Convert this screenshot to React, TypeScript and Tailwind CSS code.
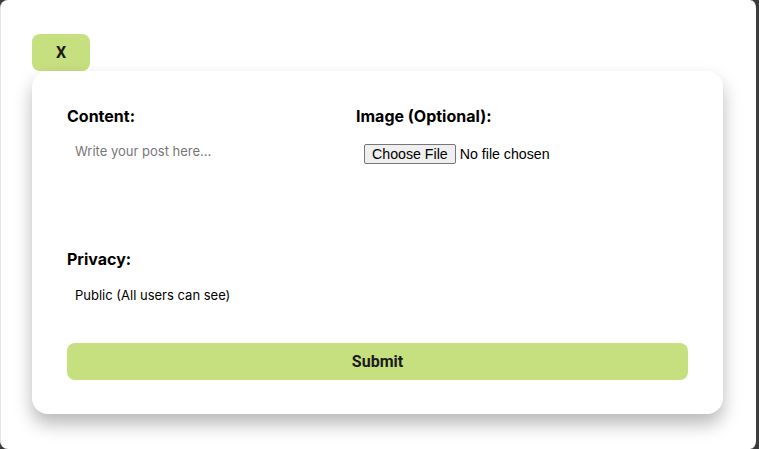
import React from 'react';

const App: React.FC = () => {
  return (
    <div className="w-[759px] h-[449px] bg-[#3a3a3a]">
      <div className="w-[758px] h-[449px] bg-white rounded-[8px] border-r-2 border-l border-l-[#e6e6e6] border-r-[#3c3c3c] pt-[34px] pl-[31px]" style={{ fontFamily: 'Inter, "Liberation Sans", sans-serif' }}>
        <button className="w-[58px] h-[37px] rounded-lg bg-[#c6df7f] text-[16px] font-bold text-[#1b1b1b] block" style={{ fontFamily: 'Roboto, sans-serif' }}>
          X
        </button>
        <div className="w-[691px] h-[343px] bg-white rounded-2xl shadow-[0_10px_18px_rgba(0,0,0,0.28)] px-[35px] pt-[34px]">
          <div className="grid grid-cols-[289px_1fr]">
            <div>
              <label className="block text-[16px] font-bold leading-[22px] text-black">Content:</label>
              <textarea
                placeholder="Write your post here..."
                className="mt-[6px] w-[270px] h-[100px] px-2 py-2 text-[13px] leading-5 resize-none outline-none placeholder:text-[#777] bg-transparent"
              />
            </div>
            <div>
              <label className="block text-[16px] font-bold leading-[22px] text-black">Image (Optional):</label>
              <input
                type="file"
                className="mt-[17px] ml-2 text-[14.2px] leading-[16px] text-black file:mr-1 file:border file:border-[#767676] file:bg-[#efefef] file:rounded-[2px] file:px-[7px] file:py-[1px] file:text-black"
                style={{ fontFamily: '"Liberation Sans", Arial, sans-serif' }}
              />
            </div>
          </div>
          <label className="block mt-[9px] text-[16px] font-bold leading-[22px] text-black">Privacy:</label>
          <select
            className="mt-[9px] appearance-none bg-transparent px-2 py-2 text-[13px] leading-4 text-black outline-none"
            defaultValue="public"
          >
            <option value="public">Public (All users can see)</option>
            <option value="friends">Friends only</option>
          </select>
          <button
            className="mt-[32px] w-full h-[37px] rounded-lg bg-[#c6df7f] text-[16px] font-bold text-[#1b1b1b]"
            style={{ fontFamily: 'Roboto, sans-serif' }}
          >
            Submit
          </button>
        </div>
      </div>
    </div>
  );
};

export default App;
